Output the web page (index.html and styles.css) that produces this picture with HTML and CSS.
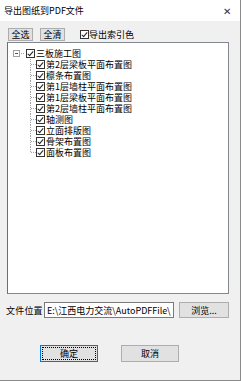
FILE: index.html
```html
<!DOCTYPE html>
<html lang="zh">
<head>
  <meta charset="UTF-8">
  <title>导出图纸到PDF文件</title>
  <link rel="stylesheet" href="styles.css">
</head>
<body>
  <div class="window">
    <div class="titlebar">
      <span class="title">导出图纸到PDF文件</span>
      <span class="close">✕</span>
    </div>

    <div class="toolbar">
      <button class="btn small">全选</button>
      <button class="btn small">全清</button>
      <label class="check"><span class="cb"></span>导出索引色</label>
    </div>

    <div class="tree">
      <div class="root">
        <span class="expander"></span>
        <span class="stub"></span>
        <span class="cb"></span>
        <span class="label">三板施工图</span>
      </div>
      <ul class="children">
        <li><span class="conn"></span><span class="cb"></span><span class="label">第2层梁板平面布置图</span></li>
        <li><span class="conn"></span><span class="cb"></span><span class="label">檩条布置图</span></li>
        <li><span class="conn"></span><span class="cb"></span><span class="label">第1层墙柱平面布置图</span></li>
        <li><span class="conn"></span><span class="cb"></span><span class="label">第1层梁板平面布置图</span></li>
        <li><span class="conn"></span><span class="cb"></span><span class="label">第2层墙柱平面布置图</span></li>
        <li><span class="conn"></span><span class="cb"></span><span class="label">轴测图</span></li>
        <li><span class="conn"></span><span class="cb"></span><span class="label">立面排版图</span></li>
        <li><span class="conn"></span><span class="cb"></span><span class="label">骨架布置图</span></li>
        <li class="last"><span class="conn"></span><span class="cb"></span><span class="label">面板布置图</span></li>
      </ul>
    </div>

    <div class="file-row">
      <span class="file-label">文件位置</span>
      <input class="path" type="text" value="E:\江西电力交流\AutoPDFFile\">
      <button class="btn browse">浏览...</button>
    </div>

    <div class="actions">
      <button class="btn wide default"><span class="focus">确定</span></button>
      <button class="btn wide">取消</button>
    </div>
  </div>
</body>
</html>
```

FILE: styles.css
```css
body {
  margin: 0;
  background: #f0f0f0;
  font-family: "Noto Sans CJK SC", "Noto Sans", sans-serif;
  font-size: 9px;
  color: #000;
}

.window {
  width: 240px;
  height: 380px;
  background: #f0f0f0;
  border-right: 1px solid #8a8a8a;
  border-bottom: 1px solid #8a8a8a;
}

.titlebar {
  height: 21px;
  background: #fff;
  display: flex;
  align-items: center;
  justify-content: space-between;
  padding: 0 9px 0 4px;
  line-height: 1;
}

.close {
  font-size: 10px;
  color: #333;
}

.btn {
  font-family: inherit;
  font-size: 9px;
  background: #e1e1e1;
  border: 1px solid #adadad;
  padding: 0;
  margin: 0;
  color: #000;
  line-height: 1;
}

.toolbar {
  display: flex;
  align-items: center;
  padding: 7px 0 0 8px;
  height: 13px;
}

.btn.small {
  width: 25px;
  height: 13px;
  margin-right: 7px;
}

.check {
  display: flex;
  align-items: center;
  margin-left: 8px;
}

.cb {
  width: 7px;
  height: 7px;
  border: 1px solid #333;
  background: #fff;
  display: flex;
  align-items: center;
  justify-content: center;
  flex: none;
}

.cb::after {
  content: "";
  width: 2px;
  height: 5px;
  border-right: 1px solid #222;
  border-bottom: 1px solid #222;
  transform: translate(0, -1px) rotate(40deg);
}

.tree {
  margin: 1px 0 0 7px;
  width: 220px;
  height: 245px;
  background: #fff;
  border: 1px solid #828790;
  border-left-color: #6d6d6d;
  padding: 5px 0 0 0;
}

.root,
.children li {
  display: flex;
  align-items: center;
  height: 11px;
  line-height: 11px;
}

.root {
  padding-left: 5px;
}

.expander {
  width: 5px;
  height: 5px;
  border: 1px solid #a0a0a0;
  display: flex;
  align-items: center;
  justify-content: center;
}

.expander::after {
  content: "";
  width: 3px;
  height: 1px;
  background: #555;
}

.stub {
  width: 4px;
  height: 1px;
  margin: 0 1px;
  background: repeating-linear-gradient(to right, #a0a0a0 0 1px, transparent 1px 2px);
}

.label {
  margin-left: 1px;
  white-space: nowrap;
}

.children {
  list-style: none;
  margin: 0;
  padding: 0 0 0 22px;
}

.conn {
  width: 6px;
  height: 11px;
  flex: none;
  background:
    repeating-linear-gradient(to bottom, #a0a0a0 0 1px, transparent 1px 2px) 0 0 / 1px 100% no-repeat,
    repeating-linear-gradient(to right, #a0a0a0 0 1px, transparent 1px 2px) 1px 5px / 5px 1px no-repeat;
}

.last .conn {
  background:
    repeating-linear-gradient(to bottom, #a0a0a0 0 1px, transparent 1px 2px) 0 0 / 1px 6px no-repeat,
    repeating-linear-gradient(to right, #a0a0a0 0 1px, transparent 1px 2px) 1px 5px / 5px 1px no-repeat;
}

.file-row {
  display: flex;
  align-items: center;
  margin-top: 8px;
  padding-left: 6px;
  height: 16px;
}

.file-label {
  width: 38px;
  letter-spacing: 0.2px;
}

.path {
  width: 126px;
  height: 14px;
  border: 1px solid #7a7a7a;
  padding: 0 0 0 2px;
  margin: 0;
  font-family: inherit;
  font-size: 9px;
  background: #fff;
}

.btn.browse {
  width: 50px;
  height: 16px;
  margin-left: 5px;
}

.actions {
  display: flex;
  margin-top: 27px;
  padding-left: 40px;
  gap: 23px;
}

.btn.wide {
  width: 58px;
  height: 17px;
}

.btn.default {
  border-color: #0078d7;
  display: flex;
  align-items: center;
  justify-content: center;
}

.focus {
  width: 52px;
  height: 11px;
  line-height: 11px;
  border: 1px dotted #000;
}
```
